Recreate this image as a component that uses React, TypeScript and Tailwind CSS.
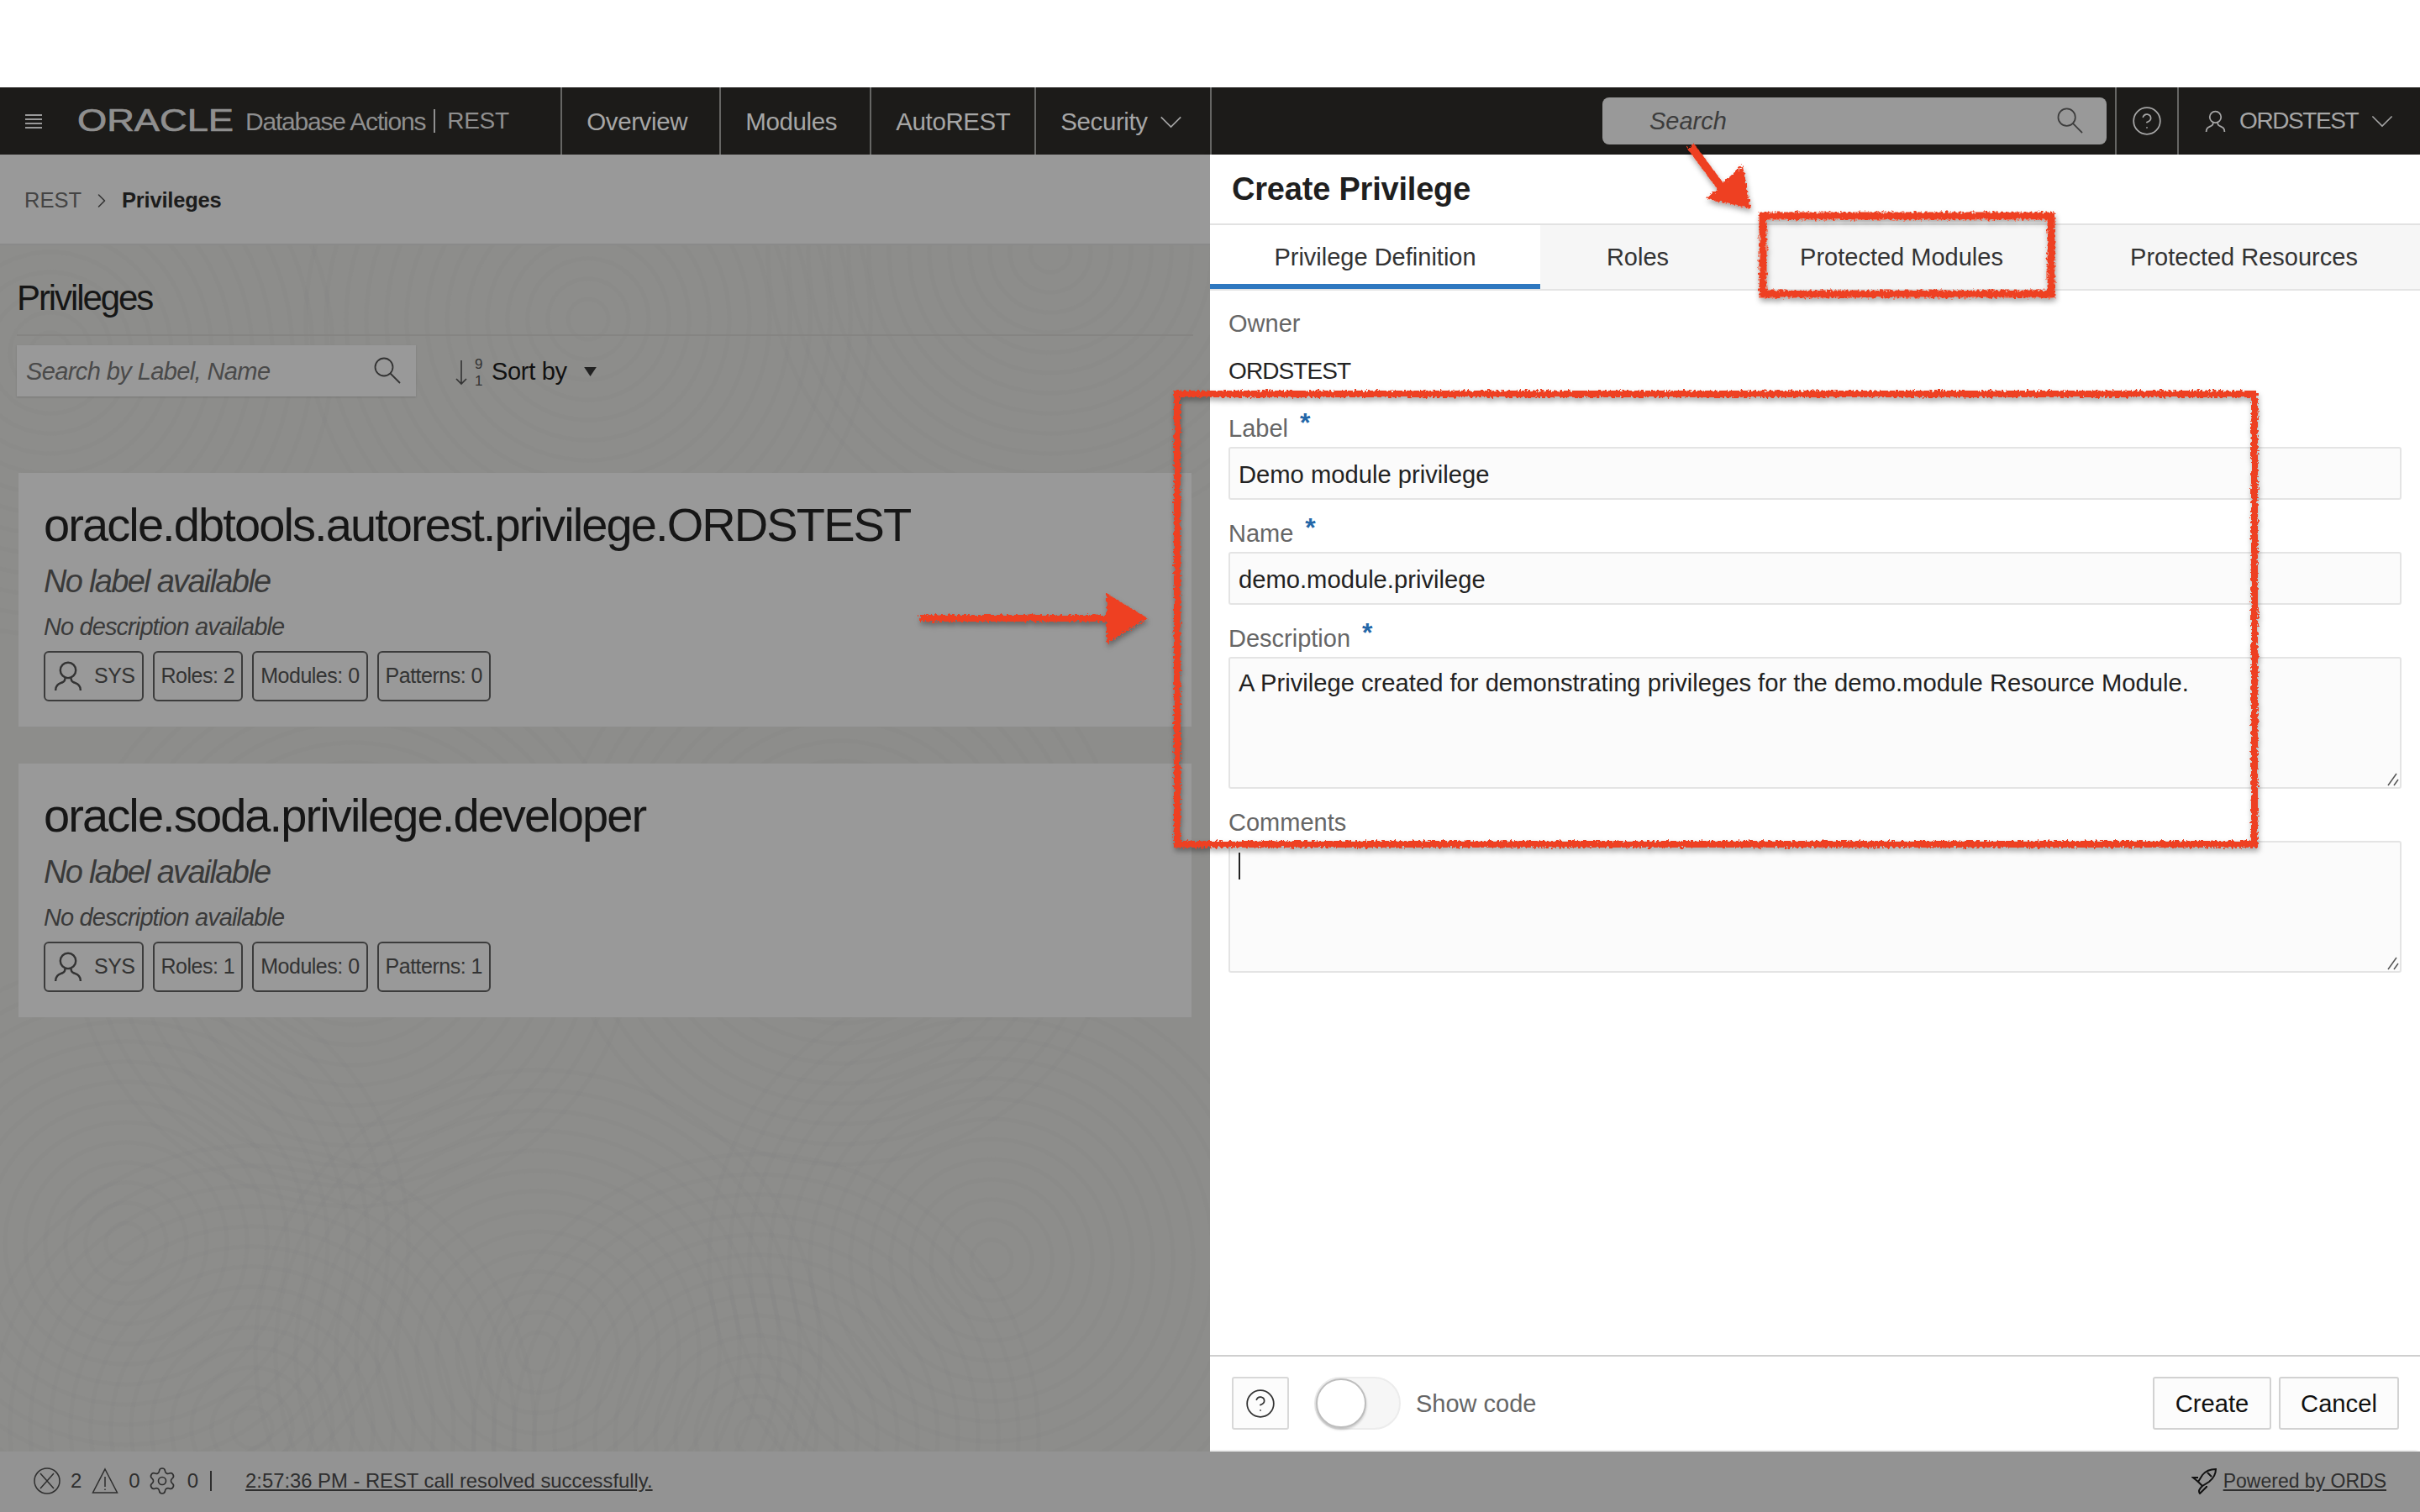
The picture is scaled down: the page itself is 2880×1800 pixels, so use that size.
import React from "react";
import { ChevronRight, CircleHelp, Settings } from "lucide-react";

const FONT = "font-['Liberation_Sans',Arial,sans-serif]";

// centres of the faint contour swirls in the page background
const SWIRLS: [number, number][] = [
  [150, 1480], [640, 1610], [1180, 1500], [420, 1100], [1000, 1050], [60, 420], [700, 380], [1250, 300], [300, 1700], [900, 1710],
];
const RINGS = [24, 48, 72, 96, 120, 144, 168, 192, 216, 240, 264, 288, 312, 336];

function UserIcon({ className }: { className?: string }) {
  return (
    <svg viewBox="0 0 24 26" fill="none" stroke="currentColor" strokeWidth="1.7" className={className}>
      <circle cx="12" cy="8" r="6.5" />
      <path d="M1.5 25c0-5 3-5.5 6-7 1.5-.7 2-2 2-3.5M22.5 25c0-5-3-5.5-6-7-1.500-.7-2-2-2-3.500" />
    </svg>
  );
}

function Chevron({ className }: { className?: string }) {
  return (
    <svg viewBox="0 0 28 16" fill="none" stroke="currentColor" strokeWidth="1.7" className={className}>
      <path d="M1.500 1.500L14 14L26.500 1.500" />
    </svg>
  );
}

function Magnifier({ className }: { className?: string }) {
  return (
    <svg viewBox="0 0 32 32" fill="none" stroke="currentColor" strokeWidth="1.8" className={className}>
      <circle cx="12" cy="12" r="10.5" />
      <path d="M19.500 19.500L31 31" />
    </svg>
  );
}

function NavItem({ label, chevron, width }: { label: string; chevron?: boolean; width: string }) {
  return (
    <div className={`flex h-full items-center gap-[14px] border-l-2 border-[#666664] pl-[29px] pt-[2px] text-[29.5px] tracking-[-0.4px] text-[#a6a6a6] ${width}`}>
      {label}
      {chevron && <Chevron className="h-[15px] w-[27px]" />}
    </div>
  );
}

function Tag({ children }: { children: React.ReactNode }) {
  return (
    <div className="flex h-[60px] items-center rounded-[6px] border-2 border-[#3c3c3c] px-[8px] text-[25px] tracking-[-0.5px] text-[#333]">
      {children}
    </div>
  );
}

function PrivilegeCard({ title, roles, patterns }: { title: string; roles: number; patterns: number }) {
  return (
    <div className="h-[302px] w-[1396px] bg-[#999] px-[30px] pt-[27px]">
      <div className="h-[70px] text-[56px] leading-[70px] tracking-[-1.9px] text-[#161616]">{title}</div>
      <div className="mt-[9px] h-[46px] text-[38px] italic leading-[46px] tracking-[-1.7px] text-[#3a3a3a]">No label available</div>
      <div className="mt-[13px] h-[36px] text-[29px] italic leading-[36px] tracking-[-0.9px] text-[#3a3a3a]">No description available</div>
      <div className="mt-[11px] flex gap-[11px]">
        <Tag>
          <UserIcon className="ml-[2px] mr-[14px] h-[38px] w-[34px] text-[#333]" />
          SYS
        </Tag>
        <Tag>Roles: {roles}</Tag>
        <Tag>Modules: 0</Tag>
        <Tag>Patterns: {patterns}</Tag>
      </div>
    </div>
  );
}

function FieldLabel({ label, required }: { label: string; required?: boolean }) {
  return (
    <div className="mb-[5px] flex h-[36px] items-center pt-[3px] text-[29px] text-[#666]">
      {label}
      {required && <span className="ml-[14px] -translate-y-[8px] text-[32px] font-bold leading-none text-[#2467a8]">*</span>}
    </div>
  );
}

function TextField({ label, value }: { label: string; value: string }) {
  return (
    <div className="mt-[21px] first:mt-0">
      <FieldLabel label={label} required />
      <input
        readOnly
        value={value}
        className="block h-[63px] w-full rounded-[3px] border-2 border-[#e4e4e4] bg-[#fbfbfb] px-[10px] pt-[3px] text-[29.2px] text-[#222] outline-none"
      />
    </div>
  );
}

function TextArea({ label, value, required, caret }: { label: string; value: string; required?: boolean; caret?: boolean }) {
  return (
    <div className="mt-[21px]">
      <FieldLabel label={label} required={required} />
      <div className="relative">
        <textarea
          readOnly
          value={value}
          className="block h-[157px] w-full resize-none rounded-[3px] border-2 border-[#e4e4e4] bg-[#fbfbfb] px-[10px] py-[14px] text-[29.2px] leading-[30px] text-[#222] outline-none"
        />
        {caret && <span className="absolute left-[12px] top-[14px] h-[32px] w-[2px] bg-[#222]" />}
        <svg viewBox="0 0 14 16" className="absolute bottom-[3px] right-[3px] h-[16px] w-[14px]" fill="none" stroke="#555" strokeWidth="1.500">
          <path d="M1 15L11 1M8 15L13 8" />
        </svg>
      </div>
    </div>
  );
}

function BackgroundSwirls() {
  return (
    <svg viewBox="0 0 1440 1544" className="pointer-events-none absolute left-0 top-0 h-[1544px] w-[1440px]" fill="none" stroke="#7c7b79" strokeOpacity="0.05" strokeWidth="5">
      {SWIRLS.map(([cx, cy]) => RINGS.map((r) => <circle key={`${cx}-${cy}-${r}`} cx={cx} cy={cy - 184} r={r} />))}
    </svg>
  );
}

function Annotations() {
  return (
    <svg viewBox="0 0 2880 1800" className="pointer-events-none absolute left-0 top-0 h-[1800px] w-[2880px]">
      <defs>
        <filter id="rough" x="-5%" y="-5%" width="110%" height="110%">
          <feTurbulence type="fractalNoise" baseFrequency="0.32" numOctaves="2" seed="4" result="n" />
          <feDisplacementMap in="SourceGraphic" in2="n" scale="7" result="d" />
          <feDropShadow in="d" dx="1" dy="4" stdDeviation="3" floodColor="#000" floodOpacity="0.35" />
        </filter>
      </defs>
      <g filter="url(#rough)" fill="none" stroke="#ee4023" strokeLinejoin="miter">
        <rect x="1401" y="469" width="1282" height="536" strokeWidth="8" />
        <rect x="2098" y="257" width="343" height="93" strokeWidth="9" />
        <path d="M1094 736H1322" strokeWidth="8" />
        <path d="M2012 174L2058 236" strokeWidth="10" />
        <path d="M1318 708L1364 736L1318 764Z" fill="#ee4023" strokeWidth="2" />
        <path d="M2073 198L2082 247L2033 236Z" fill="#ee4023" strokeWidth="2" />
      </g>
    </svg>
  );
}

export default function App() {
  return (
    <div className={`relative flex h-[1800px] w-[2880px] flex-col overflow-hidden bg-white ${FONT}`}>
      <div className="h-[104px] shrink-0 bg-white" />

      {/* top bar */}
      <div className="flex h-[80px] shrink-0 items-center bg-[#1c1b19]">
        <div className="ml-[30px] flex w-[20px] flex-col gap-[3px]">
          <span className="h-[2px] bg-[#999]" />
          <span className="h-[2px] bg-[#999]" />
          <span className="h-[2px] bg-[#999]" />
          <span className="h-[2px] bg-[#999]" />
        </div>
        <svg viewBox="0 0 190 30" className="ml-[42px] h-[30px] w-[190px] overflow-visible text-[#8f8f8f]">
          <text x="0" y="27" textLength="186" lengthAdjust="spacingAndGlyphs" fill="currentColor" stroke="currentColor" strokeWidth="0.7" fontSize="36" fontFamily="Liberation Sans">
            ORACLE
          </text>
        </svg>
        <span className="ml-[10px] text-[30px] tracking-[-1.2px] text-[#8f8f8f]">Database Actions</span>
        <span className="ml-[10px] h-[28px] w-[2px] bg-[#8f8f8f]" />
        <span className="ml-[14px] w-[135px] text-[28px] tracking-[-0.3px] text-[#8f8f8f]">REST</span>
        <NavItem label="Overview" width="w-[189px]" />
        <NavItem label="Modules" width="w-[179px]" />
        <NavItem label="AutoREST" width="w-[196px]" />
        <NavItem label="Security" chevron width="w-[209px]" />
        <div className="h-full border-l-2 border-[#666664]" />
        <div className="ml-auto flex h-[56px] w-[600px] items-center justify-between rounded-[8px] bg-[#999] pl-[56px] pr-[28px] pt-[2px] text-[29px] italic text-[#3c3c3c]">
          Search
          <Magnifier className="h-[31px] w-[31px] -translate-y-[2px] text-[#3c3c3c]" />
        </div>
        <div className="ml-[10px] flex h-full w-[74px] items-center justify-center border-l-2 border-[#666664]">
          <CircleHelp className="h-[38px] w-[38px] text-[#a6a6a6]" strokeWidth={1.1} />
        </div>
        <div className="flex h-full w-[289px] items-center border-l-2 border-[#666664] pl-[31px] text-[28px] tracking-[-1.4px] text-[#a6a6a6]">
          <UserIcon className="mr-[16px] h-[27px] w-[25px]" />
          ORDSTEST
          <Chevron className="ml-[16px] h-[15px] w-[26px]" />
        </div>
      </div>

      <div className="flex min-h-0 flex-1">
        {/* dimmed page behind the drawer */}
        <div className="relative flex w-[1440px] shrink-0 flex-col bg-[#8d8d8b]">
          <BackgroundSwirls />
          <div className="relative flex h-[108px] shrink-0 items-center gap-[10px] border-b-2 border-[#8a8a8a] bg-[#999] pl-[29px] pt-[3px] text-[25.5px]">
            <span className="text-[#444]">REST</span>
            <ChevronRight className="h-[28px] w-[28px] text-[#333]" strokeWidth={1.3} />
            <span className="font-bold tracking-[-0.2px] text-[#1c1c1c]">Privileges</span>
          </div>
          <div className="relative ml-[20px] mt-[36px] h-[72px] w-[1400px] shrink-0 border-b-2 border-[#858482] pt-[2px] text-[42px] leading-[50px] tracking-[-2.100px] text-[#161616]">Privileges</div>
          <div className="relative ml-[20px] mt-[11px] flex shrink-0 items-center">
            <div className="flex h-[61px] w-[475px] items-center justify-between bg-[#999] pl-[11px] pr-[18px] pt-[2px] text-[29px] italic tracking-[-0.6px] text-[#4a4a4a] shadow-[0_1px_2px_rgba(0,0,0,0.15)]">
              Search by Label, Name
              <Magnifier className="h-[32px] w-[32px] -translate-y-[2px] text-[#333]" />
            </div>
            <div className="ml-[46px] flex items-center pt-[2px] text-[29px] tracking-[-0.3px] text-[#111]">
              <svg viewBox="0 0 36 34" className="mr-[8px] h-[34px] w-[36px] overflow-visible text-[#333]" fill="none" stroke="currentColor" strokeWidth="1.6">
                <path d="M8 3V31M2 25l6 6 6-6" />
                <text x="24" y="13" fontSize="17" fill="currentColor" stroke="none" fontFamily="Liberation Sans">9</text>
                <text x="24" y="33" fontSize="17" fill="currentColor" stroke="none" fontFamily="Liberation Sans">1</text>
              </svg>
              Sort by
              <svg viewBox="0 0 16 12" className="ml-[20px] h-[11px] w-[15px] text-[#222]" fill="currentColor">
                <path d="M0 0H16L8 12Z" />
              </svg>
            </div>
          </div>
          <div className="relative ml-[22px] mt-[91px] flex flex-col gap-[44px]">
            <PrivilegeCard title="oracle.dbtools.autorest.privilege.ORDSTEST" roles={2} patterns={0} />
            <PrivilegeCard title="oracle.soda.privilege.developer" roles={1} patterns={1} />
          </div>
        </div>

        {/* Create Privilege drawer */}
        <div className="mb-[2px] flex min-w-0 flex-1 flex-col bg-white shadow-[-3px_0_5px_rgba(0,0,0,0.18)]">
          <div className="flex h-[84px] shrink-0 items-center border-b-2 border-[#e2e2e2] pl-[26px] text-[38px] font-bold tracking-[-0.2px] text-[#1f1f1f]">
            Create Privilege
          </div>
          <div className="flex h-[78px] shrink-0 border-b-2 border-[#e4e4e4] bg-[#f6f6f6] pt-[2px] text-[29px] text-[#333]">
            <div className="-mt-[2px] flex w-[393px] items-center justify-center border-b-[6px] border-[#2e78c0] bg-white pt-[8px]">Privilege Definition</div>
            <div className="flex w-[232px] items-center justify-center">Roles</div>
            <div className="flex w-[396px] items-center justify-center">Protected Modules</div>
            <div className="flex w-[419px] items-center justify-center">Protected Resources</div>
          </div>
          <div className="min-h-0 flex-1 px-[22px] pt-[20px]">
            <div className="flex h-[36px] items-center pt-[3px] text-[29px] text-[#666]">Owner</div>
            <div className="mt-[20px] flex h-[36px] items-center pt-[3px] text-[28px] tracking-[-0.9px] text-[#222]">ORDSTEST</div>
            <div className="mt-[33px]">
              <TextField label="Label" value="Demo module privilege" />
              <TextField label="Name" value="demo.module.privilege" />
              <TextArea label="Description" required value="A Privilege created for demonstrating privileges for the demo.module Resource Module." />
              <TextArea label="Comments" value="" caret />
            </div>
          </div>
          <div className="flex h-[113px] shrink-0 items-center border-t-2 border-[#cfcfcf] pl-[26px] pr-[25px]">
            <div className="flex h-[63px] w-[68px] items-center justify-center rounded-[3px] border-2 border-[#d8d8d8] bg-[#fcfcfc]">
              <CircleHelp className="h-[38px] w-[38px] text-[#333]" strokeWidth={1.1} />
            </div>
            <div className="ml-[30px] h-[63px] w-[103px] rounded-full border-2 border-[#ececec] bg-[#f6f6f6]">
              <div className="h-[59px] w-[60px] rounded-full border-2 border-[#bdbdbd] bg-white shadow-[0_2px_3px_rgba(0,0,0,0.2)]" />
            </div>
            <span className="ml-[18px] pt-[2px] text-[29px] text-[#666]">Show code</span>
            <div className="ml-auto flex h-[63px] w-[141px] items-center justify-center rounded-[3px] border-2 border-[#d2d2d2] bg-[#fcfcfc] pt-[2px] text-[29.2px] text-[#111]">Create</div>
            <div className="ml-[9px] flex h-[63px] w-[143px] items-center justify-center rounded-[3px] border-2 border-[#d2d2d2] bg-[#fcfcfc] pt-[2px] text-[29.2px] text-[#111]">Cancel</div>
          </div>
        </div>
      </div>

      {/* status bar */}
      <div className="flex h-[72px] shrink-0 items-center bg-[#939393] pb-[2px] pl-[40px] pr-[40px] text-[24px] text-[#2e2e2e]">
        <svg viewBox="0 0 32 32" className="h-[32px] w-[32px]" fill="none" stroke="currentColor" strokeWidth="1.500">
          <circle cx="16" cy="16" r="15" />
          <path d="M8 7L24 25M24 7L8 25" />
        </svg>
        <span className="ml-[12px]">2</span>
        <svg viewBox="0 0 32 32" className="ml-[12px] h-[32px] w-[32px]" fill="none" stroke="currentColor" strokeWidth="1.500">
          <path d="M16 2L30.500 30H1.500Z" />
          <path d="M16 11V23M16 25.500V27" />
        </svg>
        <span className="ml-[12px]">0</span>
        <Settings className="ml-[8px] h-[36px] w-[36px]" strokeWidth={1.1} />
        <span className="ml-[12px]">0</span>
        <span className="ml-[14px] h-[24px] w-[2px] bg-[#2e2e2e]" />
        <span className="ml-[40px] text-[23.8px] underline">2:57:36 PM - REST call resolved successfully.</span>
        <svg viewBox="0 0 30 32" className="ml-auto h-[32px] w-[30px] text-[#111]" fill="none" stroke="currentColor" strokeWidth="2">
          <path d="M29 2c-7 0-12 2-16 7l-5 8 5 5 8-5c5-4 8-9 8-15z" />
          <path d="M8 12H2l6 5M18 22v1l-8 8c-2-3-1-5 3-9M19 6l5 5" />
        </svg>
        <span className="ml-[8px] text-[23px] underline">Powered by ORDS</span>
      </div>

      <Annotations />
    </div>
  );
}
